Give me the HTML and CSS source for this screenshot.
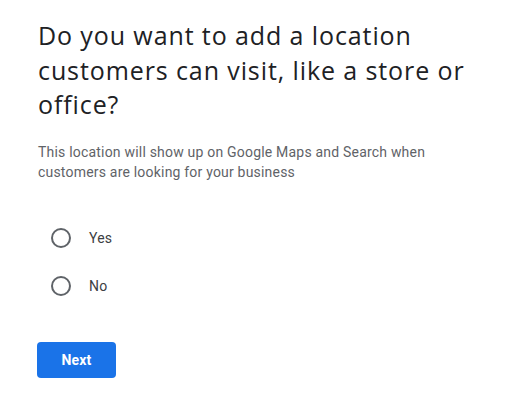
FILE: index.html
```html
<!DOCTYPE html>
<html>
<head>
<meta charset="utf-8">
<link rel="stylesheet" href="styles.css">
</head>
<body>
<main class="page">
  <h1 class="title">Do you want to add a location customers can visit, like a store or office?</h1>
  <p class="desc">This location will show up on Google Maps and Search when customers are looking for your business</p>
  <div class="options">
    <label class="option"><span class="radio"></span><span class="label">Yes</span></label>
    <label class="option"><span class="radio"></span><span class="label">No</span></label>
  </div>
  <button class="next">Next</button>
</main>
</body>
</html>
```

FILE: styles.css
```css
html, body {
  margin: 0;
  padding: 0;
  background: #fff;
}
.page {
  padding: 18px 0 0 37px;
  display: flex;
  flex-direction: column;
  align-items: flex-start;
}
.title {
  margin: 0 0 0 1px;
  width: 440px;
  font-family: "Open Sans", sans-serif;
  font-weight: 400;
  font-size: 25px;
  letter-spacing: 0.9px;
  line-height: 34.5px;
  color: #202124;
}
.desc {
  margin: 20px 0 0 1px;
  width: 440px;
  font-family: Roboto, sans-serif;
  font-size: 14px;
  letter-spacing: 0.2px;
  line-height: 20px;
  color: #5f6368;
}
.options {
  margin-top: 46px;
  display: flex;
  flex-direction: column;
  gap: 28px;
  padding-left: 14px;
}
.option {
  display: flex;
  align-items: center;
  gap: 18px;
  height: 20px;
}
.radio {
  width: 16px;
  height: 16px;
  border: 2px solid #5f6368;
  border-radius: 50%;
}
.label {
  font-family: Roboto, sans-serif;
  font-size: 14px;
  letter-spacing: 0.2px;
  color: #3c4043;
}
.next {
  margin-top: 46px;
  width: 79px;
  height: 36px;
  border: none;
  border-radius: 4px;
  background: #1a73e8;
  color: #fff;
  font-family: Roboto, sans-serif;
  font-weight: 700;
  font-size: 14px;
  letter-spacing: 0.2px;
}
```
